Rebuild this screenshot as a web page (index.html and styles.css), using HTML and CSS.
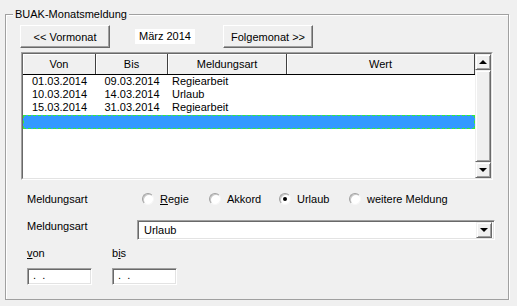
FILE: index.html
```html
<!DOCTYPE html>
<html lang="de">
<head>
    <meta charset="UTF-8">
    <title>BUAK-Monatsmeldung</title>
    <link rel="stylesheet" href="styles.css">
</head>
<body>

<fieldset class="group">
    <legend>BUAK-Monatsmeldung</legend>

    <div class="nav">
        <button class="btn">&lt;&lt; Vormonat</button>
        <span class="month">März 2014</span>
        <button class="btn btn-next">Folgemonat &gt;&gt;</button>
    </div>

    <div class="list">
        <div class="list-inner">
            <div class="grid">
                <div class="head">
                    <div class="hcell">Von</div>
                    <div class="hcell">Bis</div>
                    <div class="hcell">Meldungsart</div>
                    <div class="hcell">Wert</div>
                </div>
                <div class="row">
                    <span class="c">01.03.2014</span><span class="c">09.03.2014</span><span class="l">Regiearbeit</span><span></span>
                </div>
                <div class="row">
                    <span class="c">10.03.2014</span><span class="c">14.03.2014</span><span class="l">Urlaub</span><span></span>
                </div>
                <div class="row">
                    <span class="c">15.03.2014</span><span class="c">31.03.2014</span><span class="l">Regiearbeit</span><span></span>
                </div>
                <div class="row selected"></div>
            </div>
            <div class="scroll">
                <div class="sbtn"><span class="arrow-up"></span></div>
                <div class="thumb"></div>
                <div class="sbtn"><span class="arrow-down"></span></div>
            </div>
        </div>
    </div>

    <div class="radio-row">
        <span class="label">Meldungsart</span>
        <span class="opt"><span class="radio"></span><span><u>R</u>egie</span></span>
        <span class="opt"><span class="radio"></span><span>Akkord</span></span>
        <span class="opt"><span class="radio checked"></span><span>Urlaub</span></span>
        <span class="opt"><span class="radio"></span><span>weitere Meldung</span></span>
    </div>

    <div class="combo-row">
        <span class="label">Meldungsart</span>
        <div class="combo">
            <span class="combo-text">Urlaub</span>
            <div class="sbtn drop"><span class="arrow-down"></span></div>
        </div>
    </div>

    <div class="dates">
        <span><u>v</u>on</span>
        <span>b<u>i</u>s</span>
    </div>
    <div class="dates inputs">
        <div class="field">.&nbsp; .</div>
        <div class="field">.&nbsp; .</div>
    </div>
</fieldset>

</body>
</html>
```

FILE: styles.css
```css
* {
    box-sizing: border-box;
}

body {
    margin: 0;
    padding: 8px 8px 0 5px;
    background-color: #f0f0f0;
    color: #000;
    font-family: "Liberation Sans", Arial, sans-serif;
    font-size: 11px;
}

u {
    text-decoration: underline;
}

/* group box */
.group {
    margin: 0;
    padding: 0;
    width: 504px;
    height: 292px;
    border: 1px solid #a0a0a0;
    box-shadow: 1px 1px #fff, inset 1px 1px #fff;
}

.group legend {
    margin-left: 7px;
    padding: 0 2px;
    line-height: 13px;
    background-color: #f0f0f0;
}

/* month navigation */
.nav {
    display: flex;
    align-items: center;
    margin: 4px 0 0 14px;
}

.btn {
    width: 90px;
    height: 23px;
    padding: 0;
    font: inherit;
    color: #000;
    background-color: #f0f0f0;
    border: 1px solid;
    border-color: #fff #696969 #696969 #fff;
    box-shadow: inset -1px -1px #a0a0a0;
}

.month {
    margin-left: 25px;
    padding: 1px 4px;
    line-height: 13px;
    background-color: #fff;
}

.btn-next {
    margin-left: 28px;
}

/* list view */
.list {
    margin: 4px 0 0 15px;
    width: 472px;
    height: 128px;
    border: 1px solid;
    border-color: #a0a0a0 #fff #fff #a0a0a0;
}

.list-inner {
    display: flex;
    height: 100%;
    border: 1px solid;
    border-color: #696969 #e3e3e3 #e3e3e3 #696969;
}

.grid {
    flex: 1;
    background-color: #fff;
}

.head,
.row {
    display: grid;
    grid-template-columns: 73px 72px 119px 1fr;
}

.head {
    height: 21px;
    border-bottom: 1px solid #000;
}

.hcell {
    line-height: 20px;
    text-align: center;
    background-color: #f0f0f0;
    border-right: 1px solid #404040;
    box-shadow: inset 1px 1px #fff;
}

.row {
    height: 13px;
    line-height: 13px;
    white-space: nowrap;
}

.row .c {
    text-align: center;
}

.row .l {
    padding-left: 4px;
}

.row.selected {
    height: 14px;
    margin-top: 1px;
    background-color: #3399ff;
    border: 1px dashed #33ee33;
}

/* scrollbar */
.scroll {
    display: flex;
    flex-direction: column;
    width: 16px;
    background-color: #f0f0f0;
}

.sbtn,
.thumb {
    background-color: #f0f0f0;
    border: 1px solid;
    border-color: #f0f0f0 #696969 #696969 #f0f0f0;
    box-shadow: inset 1px 1px #fff, inset -1px -1px #a0a0a0;
}

.sbtn {
    display: flex;
    align-items: center;
    justify-content: center;
    width: 16px;
    height: 16px;
}

.thumb {
    flex: 1;
}

.arrow-up,
.arrow-down {
    width: 0;
    height: 0;
    border-left: 4px solid transparent;
    border-right: 4px solid transparent;
}

.arrow-up {
    border-bottom: 4px solid #000;
}

.arrow-down {
    border-top: 4px solid #000;
}

/* radio buttons */
.radio-row {
    display: grid;
    grid-template-columns: 115px 67px 70px 70px auto;
    align-items: center;
    margin: 11px 0 0 21px;
    height: 16px;
}

.opt {
    display: flex;
    align-items: center;
    gap: 6px;
}

.radio {
    display: flex;
    align-items: center;
    justify-content: center;
    width: 12px;
    height: 12px;
    border-radius: 50%;
    background-color: #fff;
    border: 1px solid;
    border-color: #a0a0a0 #f6f6f6 #f6f6f6 #a0a0a0;
    box-shadow: inset 1px 1px #c8c8c8;
}

.radio.checked::after {
    content: "";
    width: 4px;
    height: 4px;
    border-radius: 50%;
    background-color: #000;
}

/* combo box */
.combo-row {
    display: flex;
    align-items: flex-start;
    margin: 13px 0 0 21px;
}

.combo-row .label {
    width: 110px;
    line-height: 13px;
}

.combo {
    display: flex;
    align-items: center;
    width: 358px;
    height: 20px;
    padding: 0 1px;
    background-color: #fff;
    border: 1px solid;
    border-color: #a0a0a0 #fff #fff #a0a0a0;
    box-shadow: inset 1px 1px #696969, inset -1px -1px #e3e3e3;
}

.combo-text {
    flex: 1;
    padding-left: 5px;
}

.drop {
    margin-right: 1px;
}

/* von / bis */
.dates {
    display: grid;
    grid-template-columns: 85px 85px;
    margin: 7px 0 0 21px;
    line-height: 13px;
}

.dates.inputs {
    margin-top: 8px;
}

.field {
    width: 65px;
    height: 17px;
    padding-left: 5px;
    line-height: 13px;
    background-color: #fff;
    border: 1px solid;
    border-color: #a0a0a0 #fff #fff #a0a0a0;
    box-shadow: inset 1px 1px #696969, inset -1px -1px #e3e3e3;
}
```
